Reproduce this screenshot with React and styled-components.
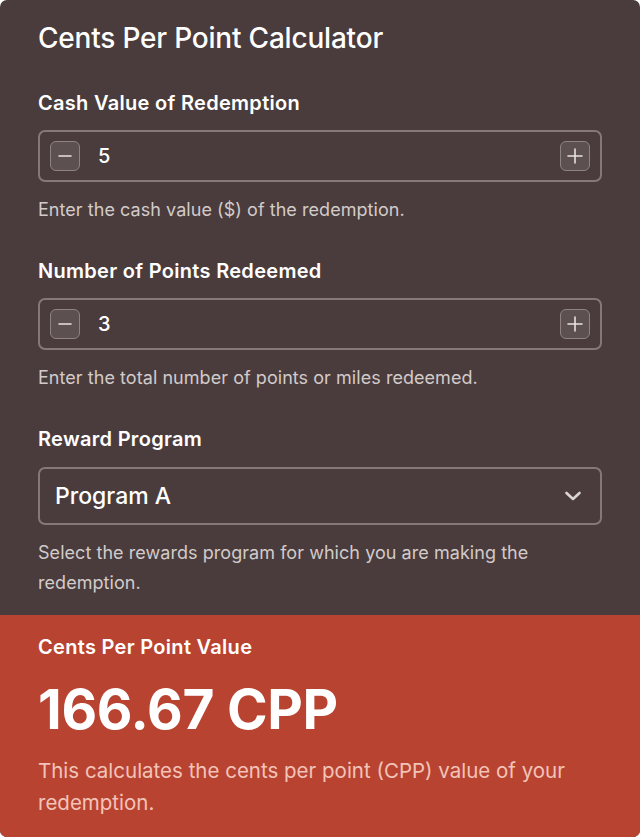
import React, { useState } from "react";
import styled, { createGlobalStyle } from "styled-components";

const Global = createGlobalStyle`
  html, body { margin: 0; padding: 0; background: #ffffff; }
  body { font-family: Inter, "Noto Sans", "Liberation Sans", sans-serif; -webkit-font-smoothing: antialiased; }
  * { box-sizing: border-box; }
`;

const Card = styled.div`
  width: 640px;
  border-radius: 7px;
  overflow: hidden;
  background: #4a3c3c;
  color: #ffffff;
`;

const Body = styled.div`
  padding: 20px 38px 17px 38px;
  display: flex;
  flex-direction: column;
`;

const Title = styled.h1`
  margin: 0 0 35px 0;
  font-size: 28px;
  font-weight: 500;
  line-height: 36px;
  letter-spacing: -0.2px;
`;

const Field = styled.div`
  display: flex;
  flex-direction: column;
  margin-bottom: ${(p) => (p.$last ? 0 : 34)}px;
`;

const Label = styled.label`
  font-size: 20px;
  font-weight: 600;
  line-height: 24px;
  letter-spacing: 0.3px;
  margin-bottom: 15px;
`;

const InputBox = styled.div`
  height: 52px;
  border: 2px solid #857877;
  border-radius: 7px;
  display: flex;
  align-items: center;
  padding: 0 10px;
`;

const StepBtn = styled.button`
  width: 30px;
  height: 30px;
  border-radius: 6px;
  border: 1.5px solid #8e8383;
  background: #5d5050;
  display: flex;
  align-items: center;
  justify-content: center;
  padding: 0;
  color: #e8e2e2;
`;

const Value = styled.span`
  flex: 1;
  margin-left: 18px;
  font-size: 20px;
  font-weight: 500;
`;

const Help = styled.p`
  margin: 13px 0 0 0;
  font-size: 18px;
  line-height: 30px;
  color: #d2cbca;
  letter-spacing: 0.05px;
`;

const Select = styled.div`
  height: 58px;
  margin-top: 1px;
  border: 2px solid #857877;
  border-radius: 7px;
  display: flex;
  align-items: center;
  justify-content: space-between;
  padding: 0 18px 0 15px;
  font-size: 23px;
  font-weight: 500;
`;

const Result = styled.div`
  background: #b94331;
  padding: 20px 38px 18px 38px;
  display: flex;
  flex-direction: column;
`;

const ResultLabel = styled.div`
  font-size: 20px;
  font-weight: 600;
  line-height: 24px;
  letter-spacing: 0.3px;
`;

const Big = styled.div`
  font-size: 55px;
  font-weight: 700;
  line-height: 60px;
  margin-top: 20px;
  letter-spacing: -0.3px;
`;

const ResultHelp = styled.p`
  margin: 16px 0 0 0;
  font-size: 20.5px;
  line-height: 32px;
  color: #f2c4b9;
`;

const Minus = () => (
  <svg width="16" height="16" viewBox="0 0 16 16">
    <path d="M2 8h12" stroke="currentColor" strokeWidth="1.6" strokeLinecap="round" />
  </svg>
);
const Plus = () => (
  <svg width="18" height="18" viewBox="0 0 18 18">
    <path d="M2 9h14M9 2v14" stroke="currentColor" strokeWidth="1.6" strokeLinecap="round" />
  </svg>
);
const Chevron = () => (
  <svg width="18" height="12" viewBox="0 0 18 12">
    <path d="M2.5 3l6.5 6 6.5-6" fill="none" stroke="#dcd5d4" strokeWidth="2.6" strokeLinecap="round" strokeLinejoin="round" />
  </svg>
);

const NumberField = ({ label, value, help }) => (
  <Field>
    <Label>{label}</Label>
    <InputBox>
      <StepBtn aria-label="decrease"><Minus /></StepBtn>
      <Value>{value}</Value>
      <StepBtn aria-label="increase"><Plus /></StepBtn>
    </InputBox>
    <Help>{help}</Help>
  </Field>
);

export default function App() {
  const [cash] = useState(5);
  const [points] = useState(3);
  const cpp = ((cash / points) * 100).toFixed(2);
  return (
    <>
      <Global />
      <Card>
        <Body>
          <Title>Cents Per Point Calculator</Title>
          <NumberField label="Cash Value of Redemption" value={cash} help="Enter the cash value ($) of the redemption." />
          <NumberField label="Number of Points Redeemed" value={points} help="Enter the total number of points or miles redeemed." />
          <Field $last>
            <Label>Reward Program</Label>
            <Select>
              <span>Program A</span>
              <Chevron />
            </Select>
            <Help>Select the rewards program for which you are making the redemption.</Help>
          </Field>
        </Body>
        <Result>
          <ResultLabel>Cents Per Point Value</ResultLabel>
          <Big>{cpp} CPP</Big>
          <ResultHelp>This calculates the cents per point (CPP) value of your redemption.</ResultHelp>
        </Result>
      </Card>
    </>
  );
}
